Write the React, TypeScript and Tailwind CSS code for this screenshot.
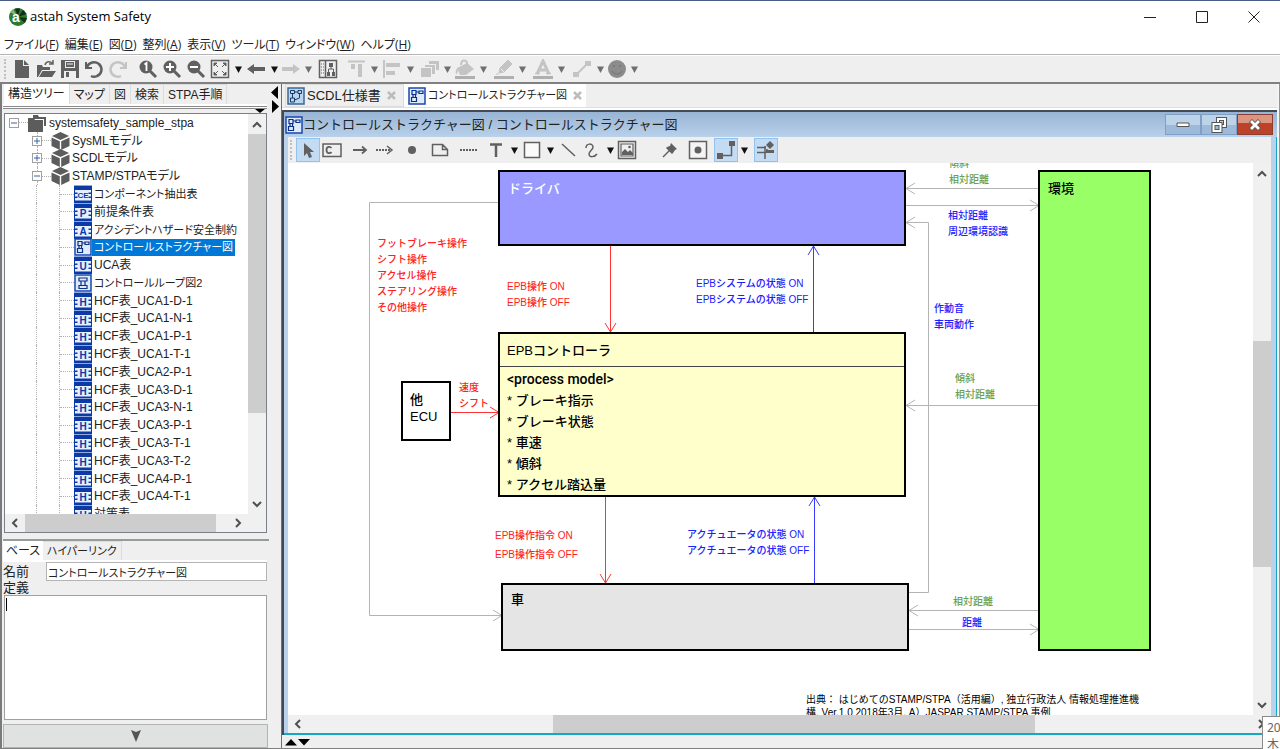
import React, { useState } from "react";

const UI_FONT = "font-['Liberation_Sans','Noto_Sans_CJK_JP',sans-serif]";
const PALT = "[font-feature-settings:'palt']";

/* ---------- icons ---------- */

const Svg = ({ size = 20, children }: { size?: number; children: React.ReactNode }) => (
  <svg width={size} height={size} viewBox="0 0 20 20" fill="none" className="shrink-0" aria-hidden="true">
    {children}
  </svg>
);

const G = "#606060";
const L = "#c4c4c4";

const icons: Record<string, React.ReactNode> = {
  file: <Svg><path d="M3 1h8v6h6v12H3z" fill={G} /><path d="M12 1l5 5h-5z" fill={G} /></Svg>,
  open: <Svg><path d="M1 18V6h5l1 2h7v3H6l-4 7z" fill={G} /><path d="M6.500 12H20l-4 6H3z" fill={G} /><path d="M9 6c1-4 5-4 7-2M17 1v4h-4" stroke={G} strokeWidth="1.500" /></Svg>,
  save: <Svg><path d="M1 1h18v18H1z" fill={G} /><path d="M5 2h10v7H5zM4 12h12v7H4z" fill="#efefef" /><path d="M6 3h8v5H6zM6 13h3v5H6z" fill={G} /><path d="M7 5h6" stroke="#efefef" /></Svg>,
  undo: <Svg><path d="M2 3v6h6" stroke={G} strokeWidth="2" /><path d="M3 8c2-5 8-6 12-3 4 4 3 10-2 12-2 1-4 1-6 0" stroke={G} strokeWidth="2.500" /></Svg>,
  redo: <Svg><path d="M18 3v6h-6" stroke={L} strokeWidth="2" /><path d="M17 8c-2-5-8-6-12-3-4 4-3 10 2 12 2 1 4 1 6 0" stroke={L} strokeWidth="2.500" /></Svg>,
  zoomOne: <Svg><circle cx="8" cy="8" r="6.500" fill={G} /><path d="M12 12l6 6" stroke={G} strokeWidth="3" /><path d="M6.500 5.500L8.500 4v8" stroke="#fff" strokeWidth="1.800" /></Svg>,
  zoomIn: <Svg><circle cx="8" cy="8" r="6.500" fill={G} /><path d="M12 12l6 6" stroke={G} strokeWidth="3" /><path d="M4 8h8M8 4v8" stroke="#fff" strokeWidth="2" /></Svg>,
  zoomOut: <Svg><circle cx="8" cy="8" r="6.500" fill={G} /><path d="M12 12l6 6" stroke={G} strokeWidth="3" /><path d="M4 8h8" stroke="#fff" strokeWidth="2" /></Svg>,
  fit: <Svg><path d="M1.500 1.500h17v17h-17z" stroke={G} strokeWidth="1.500" /><path d="M4 7V4h3zM13 4h3v3zM16 13v3h-3zM7 16H4v-3z" fill={G} stroke={G} /><path d="M4 4l4 4M16 4l-4 4M16 16l-4-4M4 16l4-4" stroke={G} /></Svg>,
  left: <Svg><path d="M1 10l7-5v3h11v4H8v3z" fill={G} /></Svg>,
  right: <Svg><path d="M19 10l-7-5v3H1v4h11v3z" fill={L} /></Svg>,
  tree: <Svg><path d="M1.500 1.500h17v17h-17zM7.500 1.500v17" stroke={G} strokeWidth="1.500" /><path d="M3 5h3M3 8h3M3 11h3M3 14h3" stroke={G} strokeDasharray="1 1" /><path d="M11 4h4v4h-4zM9 13h3v4H9zM14 13h3v4h-3z" fill={G} /><path d="M13 8v2M10.500 13v-3h5v3" stroke={G} /></Svg>,
  alignTop: <Svg><path d="M1 2.500h17" stroke={L} strokeWidth="2" /><path d="M4 5h4v5H4zM11 5h4v13h-4z" fill={L} /></Svg>,
  alignLeft: <Svg><path d="M2 1v18" stroke={L} strokeWidth="2" /><path d="M4 4h14v4H4zM4 12h9v4H4z" fill={L} /></Svg>,
  layers: <Svg><path d="M1 9h10v9H1z" fill={L} /><path d="M5 8V6h10v9h-3V8zM9 5V2h10v9h-3V5z" fill={L} /></Svg>,
  bucket: <Svg><path d="M0 18.500h20" stroke="#b0b0b0" strokeWidth="3" /><path d="M2 9l10-5 7 6-8 6H5z" fill={L} /><path d="M6 6c0-6 7-6 6 0" stroke={L} strokeWidth="2" /><path d="M2 9c-1 2-2 5-1 6s2-3 2-5" fill={L} /></Svg>,
  pencil: <Svg><path d="M0 18.500h20" stroke="#b0b0b0" strokeWidth="3" /><path d="M6 9l8-8 4 4-8 8-5 1zM5 15h-3" fill={L} stroke={L} /><path d="M7 10l3 3" stroke="#efefef" /></Svg>,
  letter: <Svg><path d="M0 18.500h20" stroke="#b0b0b0" strokeWidth="3" /><path d="M4 15L10 2l6 13M6 11h8" stroke={L} strokeWidth="3" /><path d="M2 14.500h5M13 14.500h5" stroke={L} strokeWidth="1.500" /></Svg>,
  connector: <Svg><path d="M4 16L15 5" stroke={L} strokeWidth="2" /><path d="M1 13h6v5H1zM13 2h6v5h-6z" fill={L} /></Svg>,
  face: <Svg><circle cx="10" cy="10" r="9" fill="#8c8c8c" /><path d="M5 12c2 4 8 4 10 0" stroke="#7c7c7c" strokeWidth="1.500" /><path d="M6 7h2M12 7h2" stroke="#7c7c7c" strokeWidth="2" /></Svg>,
  cursor: <Svg><path d="M6 3v13l3-3 2 5 3-1-2-5h4z" fill={G} /></Svg>,
  component: <Svg><path d="M1 4h18v12.500H1z" stroke={G} strokeWidth="1.500" /><path d="M9.500 8c-1.500-2-5-1.500-5 2s3.500 4 5 2" stroke={G} strokeWidth="1.800" /></Svg>,
  arrow: <Svg><path d="M3 10h13M12 6.500l4 3.500-4 3.500" stroke={G} strokeWidth="1.800" /></Svg>,
  dotArrow: <Svg><path d="M2 10h14" stroke={G} strokeWidth="1.800" strokeDasharray="2 1" /><path d="M13 6l5 4-5 4" stroke={G} strokeWidth="1.500" /></Svg>,
  dot: <Svg><circle cx="10" cy="10" r="4" fill={G} /></Svg>,
  note: <Svg><path d="M2.500 4.500h10l5 5v6h-15zM12.500 4.500v5h5" stroke={G} strokeWidth="1.500" /></Svg>,
  dots: <Svg><path d="M2 10h17" stroke={G} strokeWidth="2" strokeDasharray="2 1" /></Svg>,
  text: <Svg><path d="M4 4.500h12" stroke={G} strokeWidth="2.500" /><path d="M10 4v13" stroke={G} strokeWidth="2.500" /></Svg>,
  rect: <Svg><path d="M2.500 2.500h15v15h-15z" stroke={G} strokeWidth="1.500" fill="#fafafa" /></Svg>,
  line: <Svg><path d="M4 4l13 12" stroke={G} strokeWidth="1.500" /></Svg>,
  curve: <Svg><path d="M4 8c0-5 7-5 7-1 0 3-4 4-4 7 0 4 6 3 8 0" stroke={G} strokeWidth="1.500" /></Svg>,
  image: <Svg><path d="M1.500 1.500h17v17h-17z" stroke={G} strokeWidth="1.500" /><path d="M4 4h12v12H4z" stroke={G} strokeWidth="1.200" /><path d="M5 15v-3l3-3 3 3 2-2 3 3v2z" fill={G} /><circle cx="12.500" cy="7" r="1.300" fill={G} /></Svg>,
  pin: <Svg><path d="M3 17l7-7" stroke={G} strokeWidth="1.500" /><path d="M11 3l6 6-2 1-2 3-1 1-6-6 1-1 3-1z" fill={G} /></Svg>,
  target: <Svg><path d="M1.500 1.500h17v17h-17z" stroke={G} strokeWidth="1.500" fill="#f4f4f4" /><circle cx="10" cy="10" r="3.500" fill={G} /></Svg>,
  elbow: <Svg><path d="M5 15.500h10.500V5" stroke={G} strokeWidth="1.500" /><path d="M1 13h6v6H1zM13 1h6v5h-6z" fill={G} /></Svg>,
  suggest: <Svg><path d="M1 7.500h9M1 12.500h9M9 6v13M10 10h2" stroke={G} strokeWidth="1.500" /><path d="M14 1l4 4-4 4-4-4zM10 10h8v3h-8z" fill={G} /></Svg>,
};

const Caret = ({ light = false }: { light?: boolean }) => (
  <svg width="7" height="7" viewBox="0 0 7 7" aria-hidden="true">
    <path d="M0 0.500h7L3.500 7z" fill={light ? "#6f6f6f" : "#111"} />
  </svg>
);

const Chevron = ({ dir }: { dir: "up" | "down" | "left" | "right" }) => {
  const d = {
    up: "M1 8l4-4 4 4",
    down: "M1 3l4 4 4-4",
    left: "M7 1L3 5l4 4",
    right: "M3 1l4 4-4 4",
  }[dir];
  return (
    <svg width="10" height="10" viewBox="0 0 10 10" fill="none" aria-hidden="true">
      <path d={d} stroke="#505050" strokeWidth="2" />
    </svg>
  );
};

const StructureIcon = () => (
  <svg width="18" height="18" viewBox="0 0 18 18" fill="none" className="shrink-0" aria-hidden="true">
    <path d="M1 1h16v16H1z" fill="#dfeafb" stroke="#1848b0" strokeWidth="1.500" />
    <path d="M4 3.500h4v4H4zM3.500 10.500h5v4h-5zM5 7.500v3M7.500 7.500v3M8 5h3M11 4h4v2.500h-4z" stroke="#0a2f8c" strokeWidth="1.200" />
  </svg>
);

const ScdlIcon = () => (
  <svg width="18" height="18" viewBox="0 0 18 18" fill="none" className="shrink-0" aria-hidden="true">
    <path d="M1 1h16v16H1z" fill="#b9d6f0" stroke="#3c6596" strokeWidth="1.500" />
    <path d="M3.500 3.500h4v3h-4zM11 3.500h3.500v3H11zM3.500 11h4v4h-4zM7.500 5H11M5.500 6.500V11M12.500 6.500v4.500l-5 2" stroke="#1c3a66" />
  </svg>
);

const LoopIcon = () => (
  <svg width="18" height="18" viewBox="0 0 18 18" fill="none" className="shrink-0" aria-hidden="true">
    <path d="M1 1h16v16H1z" fill="#dfeafb" stroke="#1848b0" strokeWidth="1.500" />
    <path d="M5 4h8v3H5zM5 11.500h8v3H5zM7 7v4.500M11 7v4.500" stroke="#0a2f8c" strokeWidth="1.200" />
  </svg>
);

const TableIcon = ({ letter }: { letter: string }) => (
  <svg width="18" height="18" viewBox="0 0 18 18" className="shrink-0" aria-hidden="true">
    <path d="M0 0h18v18H0z" fill="#0b39a6" />
    <path d="M0 0h18v1H0z" fill="#8fa9dc" />
    <path d="M1 5h3v2.500H1zM1 9h3v2.500H1zM1 13h3v2.500H1zM14 5h3v2.500h-3zM14 9h3v2.500h-3zM14 13h3v2.500h-3zM3.500 5h11v10.500h-11z" fill="#e6efff" />
    <text x="9" y={letter.length > 1 ? 13 : 14} textAnchor="middle" fontSize={letter.length > 1 ? 8 : 10} fontWeight="700" fill="#0b39a6" fontFamily="Liberation Sans, sans-serif">
      {letter}
    </text>
  </svg>
);

const CubeIcon = () => (
  <svg width="19" height="18" viewBox="0 0 19 18" className="shrink-0" aria-hidden="true">
    <path d="M9.500 0L18 4 9.500 8 1 4zM0.500 5.500L8.800 9.300V18L0.500 14zM18.500 5.500L10.200 9.300V18l8.300-4z" fill="#5c5c5c" />
  </svg>
);

const FolderIcon = () => (
  <svg width="19" height="18" viewBox="0 0 19 18" className="shrink-0" aria-hidden="true">
    <path d="M5 1h5l1 2h7v9h-2V5H5z" fill="#5c5c5c" />
    <path d="M0 4h6l1 2h8v12H0z" fill="#5c5c5c" />
  </svg>
);

/* ---------- scroll bars ---------- */

const VScroll = ({ before, thumb, after }: { before: string; thumb: string; after: string }) => (
  <div className="flex w-[18px] shrink-0 flex-col bg-[#f0f0f0]">
    <button aria-label="上へ" className="flex h-5 shrink-0 items-center justify-center"><Chevron dir="up" /></button>
    <div className={before} />
    <div className={"bg-[#cdcdcd] " + thumb} />
    <div className={after} />
    <button aria-label="下へ" className="flex h-5 shrink-0 items-center justify-center"><Chevron dir="down" /></button>
  </div>
);

const HScroll = ({ before, thumb, after }: { before: string; thumb: string; after: string }) => (
  <div className="flex h-[18px] min-w-0 flex-1 bg-[#f0f0f0]">
    <button aria-label="左へ" className="flex w-5 shrink-0 items-center justify-center"><Chevron dir="left" /></button>
    <div className={before} />
    <div className={"bg-[#cdcdcd] " + thumb} />
    <div className={after} />
    <button aria-label="右へ" className="flex w-5 shrink-0 items-center justify-center"><Chevron dir="right" /></button>
  </div>
);

/* ---------- title, menu and tool bars ---------- */

const TitleBar = () => (
  <header className="flex h-8 shrink-0 items-center bg-white pl-2">
    <svg width="20" height="20" viewBox="0 0 20 20" aria-hidden="true">
      <circle cx="10" cy="10" r="9" fill="#2c7a2f" />
      <path d="M10 10L7 1.500h5zM10 10l5-7 3.500 4zM10 10l9 1-2 5z" fill="#12301a" />
      <path d="M10 10L2 5l3-3z" fill="#7fb96a" />
      <text x="8" y="15" textAnchor="middle" fontSize="14" fontWeight="700" fill="#fff" fontFamily="Liberation Sans, sans-serif">a</text>
    </svg>
    <h1 className="ml-[2px] flex-1 font-['Open_Sans',sans-serif] text-[13px] text-black">astah System Safety</h1>
    <button aria-label="最小化" className="flex h-8 w-[52px] items-center justify-center">
      <svg width="12" height="12" viewBox="0 0 12 12"><path d="M0 6.500h12" stroke="#222" /></svg>
    </button>
    <button aria-label="最大化" className="flex h-8 w-[52px] items-center justify-center">
      <svg width="12" height="12" viewBox="0 0 12 12" fill="none"><path d="M.5.5h11v11H.5z" stroke="#222" /></svg>
    </button>
    <button aria-label="閉じる" className="flex h-8 w-[52px] items-center justify-center">
      <svg width="12" height="12" viewBox="0 0 12 12" fill="none"><path d="M.5.5l11 11M11.500.5l-11 11" stroke="#222" /></svg>
    </button>
  </header>
);

const menus = [
  ["ファイル", "F"],
  ["編集", "E"],
  ["図", "D"],
  ["整列", "A"],
  ["表示", "V"],
  ["ツール", "T"],
  ["ウィンドウ", "W"],
  ["ヘルプ", "H"],
];

const MenuBar = () => (
  <nav className={"flex h-[22px] shrink-0 items-center gap-[6px] border-b border-[#b5b5b5] bg-white pt-[2px] pl-1 font-['Open_Sans','Noto_Sans_CJK_JP',sans-serif] text-[12px] text-[#222] " + PALT}>
    {menus.map(([label, key]) => (
      <button key={key} className="whitespace-nowrap">
        {label}(<span className="underline">{key}</span>)
      </button>
    ))}
  </nav>
);

type Tool = { icon: string; name: string; box: string; caret?: string; light?: boolean };

const mainTools: Tool[] = [
  { icon: "file", name: "新規", box: "ml-[4px] w-6" },
  { icon: "open", name: "開く", box: "w-6" },
  { icon: "save", name: "保存", box: "w-6" },
  { icon: "undo", name: "元に戻す", box: "w-6" },
  { icon: "redo", name: "やり直し", box: "w-6" },
  { icon: "zoomOne", name: "等倍", box: "ml-[6px] w-6" },
  { icon: "zoomIn", name: "拡大", box: "w-6" },
  { icon: "zoomOut", name: "縮小", box: "w-6" },
  { icon: "fit", name: "全体表示", box: "w-6", caret: "w-3" },
  { icon: "left", name: "戻る", box: "w-6", caret: "w-3" },
  { icon: "right", name: "進む", box: "w-[22px]", caret: "w-3", light: true },
  { icon: "tree", name: "構造", box: "ml-[2px] w-6" },
  { icon: "alignTop", name: "上揃え", box: "ml-[6px] w-[22px]", caret: "w-3", light: true },
  { icon: "alignLeft", name: "左揃え", box: "w-6", caret: "w-3", light: true },
  { icon: "layers", name: "重なり順", box: "ml-[3px] w-[22px]", caret: "w-3", light: true },
  { icon: "bucket", name: "塗り", box: "w-6", caret: "w-3", light: true },
  { icon: "pencil", name: "線の色", box: "ml-[3px] w-6", caret: "w-3", light: true },
  { icon: "letter", name: "文字色", box: "ml-[3px] w-6", caret: "w-3", light: true },
  { icon: "connector", name: "線の形", box: "ml-[3px] w-6", caret: "w-3", light: true },
  { icon: "face", name: "アイコン", box: "w-[22px]", caret: "w-3", light: true },
];

const diagramTools: Tool[] = [
  { icon: "cursor", name: "選択", box: "ml-[4px] w-6 border border-[#91c3ee] bg-[#c3dcf3]" },
  { icon: "component", name: "コンポーネント", box: "w-6" },
  { icon: "arrow", name: "コントロールアクション", box: "ml-[4px] w-6" },
  { icon: "dotArrow", name: "フィードバック", box: "w-6" },
  { icon: "dot", name: "接点", box: "ml-[4px] w-6" },
  { icon: "note", name: "ノート", box: "ml-[4px] w-6" },
  { icon: "dots", name: "アンカー", box: "ml-[4px] w-6" },
  { icon: "text", name: "テキスト", box: "ml-[4px] w-6", caret: "w-3" },
  { icon: "rect", name: "四角形", box: "w-6", caret: "w-3" },
  { icon: "line", name: "直線", box: "w-6" },
  { icon: "curve", name: "自由線", box: "w-6", caret: "w-3" },
  { icon: "image", name: "画像", box: "w-[22px]" },
  { icon: "pin", name: "固定", box: "ml-[20px] w-6" },
  { icon: "target", name: "中央", box: "ml-[4px] w-6" },
  { icon: "elbow", name: "折れ線", box: "ml-[4px] w-6 border border-[#91c3ee] bg-[#c3dcf3]", caret: "w-3" },
  { icon: "suggest", name: "サジェスト", box: "ml-[4px] w-6 border border-[#91c3ee] bg-[#c3dcf3]" },
];

const ToolRow = ({ tools }: { tools: Tool[] }) => (
  <>
    {tools.map((t) => (
      <React.Fragment key={t.icon}>
        <button aria-label={t.name} className={"flex h-6 shrink-0 items-center justify-center " + t.box}>
          {icons[t.icon]}
        </button>
        {t.caret && (
          <button aria-label={t.name + "メニュー"} className={"flex h-6 shrink-0 items-center justify-center " + t.caret}>
            <Caret light={t.light} />
          </button>
        )}
      </React.Fragment>
    ))}
  </>
);

/* ---------- left side ---------- */

type Node = { level: number; label: string; icon: React.ReactNode; open?: boolean; small?: boolean };

const hcf = ["1-D-1", "1-N-1", "1-P-1", "1-T-1", "2-P-1", "3-D-1", "3-N-1", "3-P-1", "3-T-1", "3-T-2", "4-P-1", "4-T-1"];

const nodes: Node[] = [
  { level: 0, label: "systemsafety_sample_stpa", icon: <FolderIcon />, open: true },
  { level: 1, label: "SysMLモデル", icon: <CubeIcon /> },
  { level: 1, label: "SCDLモデル", icon: <CubeIcon /> },
  { level: 1, label: "STAMP/STPAモデル", icon: <CubeIcon />, open: true },
  { level: 2, label: "コンポーネント抽出表", icon: <TableIcon letter="CE" />, small: true },
  { level: 2, label: "前提条件表", icon: <TableIcon letter="P" /> },
  { level: 2, label: "アクシデントハザード安全制約", icon: <TableIcon letter="A" />, small: true },
  { level: 2, label: "コントロールストラクチャー図", icon: <StructureIcon />, small: true },
  { level: 2, label: "UCA表", icon: <TableIcon letter="U" /> },
  { level: 2, label: "コントロールループ図2", icon: <LoopIcon />, small: true },
  ...hcf.map((n) => ({ level: 2, label: "HCF表_UCA" + n, icon: <TableIcon letter="H" /> })),
  { level: 2, label: "対策表", icon: <TableIcon letter="H" /> },
];

const Expander = ({ open, first }: { open?: boolean; first?: boolean }) => (
  <div className="flex w-[10px] flex-col items-center self-stretch">
    <div className={first ? "flex-1" : "flex-1 border-l border-dotted border-[#b0b0b0]"} />
    <button aria-label={open ? "閉じる" : "開く"} className="flex size-[10px] items-center justify-center border border-[#a0a0a0] bg-white">
      <svg width="6" height="6" viewBox="0 0 6 6"><path d={open ? "M0 3h6" : "M0 3h6M3 0v6"} stroke="#3464a8" /></svg>
    </button>
    <div className={first ? "flex-1" : "flex-1 border-l border-dotted border-[#b0b0b0]"} />
  </div>
);

const TreeRow = ({ node, selected, onSelect }: { node: Node; selected: boolean; onSelect: () => void }) => (
  <li className="flex min-h-0 items-center">
    {node.level === 0 && <div className="w-1" />}
    {node.level === 1 && <div className="w-[27px]" />}
    {node.level < 2 && <Expander open={node.open} first={node.level === 0} />}
    {node.level === 2 && (
      <>
        <div className="w-8 self-stretch border-r border-dotted border-[#b0b0b0]" />
        <div className="w-[23px] self-stretch border-r border-dotted border-[#b0b0b0]" />
      </>
    )}
    <div className={"border-t border-dotted border-[#b0b0b0] " + (node.level === 2 ? "w-[14px]" : "w-[9px]")} />
    {node.icon}
    <button
      onClick={onSelect}
      className={
        "h-[17px] whitespace-nowrap px-[2px] leading-4 " +
        (node.small ? "text-[11px] " : "text-[12px] ") +
        (selected ? "bg-[#0078d7] text-white" : "text-[#222]")
      }
    >
      {node.label}
    </button>
  </li>
);

const sideTabs = ["構造ツリー", "マップ", "図", "検索", "STPA手順"];

const StructurePanel = () => {
  const [selected, setSelected] = useState("コントロールストラクチャー図");
  return (
    <section className="flex min-h-0 flex-1 flex-col">
      <div className="flex h-5 shrink-0 items-stretch pl-px text-[12px] text-[#222]">
        {sideTabs.map((t, i) => (
          <button key={t} className={"flex items-center whitespace-nowrap border-r border-[#dcdcdc] px-1 " + (i === 0 ? "bg-white" : "border-t")}>
            {t}
          </button>
        ))}
      </div>
      <div className="mr-[2px] flex h-[5px] shrink-0 justify-end border-t-2 border-white">
        <div className="flex-1 border-y border-[#8a8a8a] bg-white" />
      </div>
      <div className="flex h-1 shrink-0 justify-end pr-1">
        <svg width="10" height="4" viewBox="0 0 10 4"><path d="M0 0h10L5 4z" fill="#000" /></svg>
      </div>
      <div className="mr-[2px] ml-px flex min-h-0 flex-1 flex-col border border-[#7a7f88] bg-white">
        <div className="flex min-h-0 flex-1">
          <div className="min-w-0 flex-1 overflow-hidden">
            <ul className="grid h-[409px] auto-rows-fr">
              {nodes.map((n) => (
                <TreeRow key={n.label} node={n} selected={n.label === selected} onSelect={() => setSelected(n.label)} />
              ))}
            </ul>
          </div>
          <VScroll before="h-0" thumb="flex-[279]" after="flex-[81]" />
        </div>
        <div className="flex shrink-0">
          <HScroll before="w-0" thumb="flex-1" after="w-3" />
          <div className="w-[18px] bg-[#f0f0f0]" />
        </div>
      </div>
    </section>
  );
};

const PropertyPanel = () => (
  <section className="mt-[6px] flex shrink-0 flex-col border-t-2 border-[#9a9a9a] text-[13px] text-[#222]">
    <div className="flex h-[19px] text-[12px]">
      <button className="w-10 bg-white">ベース</button>
      <button className="whitespace-nowrap border-t border-r border-[#dcdcdc] px-1 text-[11px]">ハイパーリンク</button>
    </div>
    <div className="mr-[2px] h-[2px] bg-white" />
    <div className="mr-[2px] flex h-[19px] items-center">
      <label htmlFor="name" className="w-[43px]">名前</label>
      <input id="name" defaultValue="コントロールストラクチャー図" className="h-[19px] min-w-0 flex-1 border border-[#b4b4b4] bg-white px-px text-[11px]" />
    </div>
    <label htmlFor="definition" className="h-[14px] leading-[14px]">定義</label>
    <div className="relative mr-[2px] ml-px flex">
      <textarea id="definition" className="h-[125px] flex-1 resize-none border border-[#a0a0a0] bg-white p-1" />
      <span className="absolute top-[3px] left-[2px] h-[13px] w-px bg-black" />
    </div>
    <button aria-label="詳細" className="mt-1 mr-px flex h-6 items-center justify-center border border-[#b4b4b4] bg-[#e0e2e1]">
      <svg width="10" height="12" viewBox="0 0 10 12"><path d="M0 0l5 2 5-2-5 12z" fill="#555" /></svg>
    </button>
  </section>
);

/* ---------- diagram ---------- */

const RED = "#ff3333";
const BLUE = "#3a3aff";
const GRAY = "#b4b4b4";

const wires = [
  { d: "M322.500 82V169", head: "M317 160l5.500 9 5.500-9", color: RED },
  { d: "M317.500 334V420", head: "M312 411l5.500 9 5.500-9", color: RED },
  { d: "M525.500 169V83", head: "M520 92l5.500-9 5.500 9", color: BLUE },
  { d: "M526.500 420V334", head: "M521 343l5.500-9 5.500 9", color: BLUE },
  { d: "M163 249.500H211", head: "M202 244l9 5.500-9 5.500", color: RED },
  { d: "M211 39.500H81.500V452.500H213", head: "M205 447l9 5.500-9 5.500", color: GRAY },
  { d: "M750 25.500H618", head: "M627 20l-9 5.500 9 5.500", color: GRAY },
  { d: "M618 42.500H750", head: "M742 37l9 5.500-9 5.500", color: GRAY },
  { d: "M621 429.500H640.500V59.500H618", head: "M627 54l-9 5.500 9 5.500", color: GRAY },
  { d: "M750 242.500H618", head: "M627 237l-9 5.500 9 5.500", color: GRAY },
  { d: "M750 447.500H621", head: "M630 442l-9 5.500 9 5.500", color: GRAY },
  { d: "M621 466.500H750", head: "M742 461l9 5.500-9 5.500", color: GRAY },
];

const labels = [
  { at: "left-[89px] top-[73px] text-[#ff2020]", lines: ["フットブレーキ操作", "シフト操作", "アクセル操作", "ステアリング操作", "その他操作"] },
  { at: "left-[219px] top-[116px] text-[#ff2020]", lines: ["EPB操作 ON", "EPB操作 OFF"] },
  { at: "left-[171px] top-[217px] text-[#ff2020]", lines: ["速度", "シフト"] },
  { at: "left-[207px] top-[365px] text-[#ff2020]", lines: ["EPB操作指令 ON"] },
  { at: "left-[207px] top-[384px] text-[#ff2020]", lines: ["EPB操作指令 OFF"] },
  { at: "left-[408px] top-[113px] text-[#2020ff]", lines: ["EPBシステムの状態 ON", "EPBシステムの状態 OFF"] },
  { at: "left-[399px] top-[364px] text-[#2020ff]", lines: ["アクチュエータの状態 ON", "アクチュエータの状態 OFF"] },
  { at: "left-[660px] top-[45px] text-[#2020ff]", lines: ["相対距離", "周辺環境認識"] },
  { at: "left-[646px] top-[138px] text-[#2020ff]", lines: ["作動音", "車両動作"] },
  { at: "left-[674px] top-[452px] text-[#2020ff]", lines: ["距離"] },
  { at: "left-[661px] top-[-7px] text-[#68a050]", lines: ["傾斜", "相対距離"] },
  { at: "left-[667px] top-[208px] text-[#68a050]", lines: ["傾斜", "相対距離"] },
  { at: "left-[665px] top-[431px] text-[#68a050]", lines: ["相対距離"] },
];

const processModel = ["ブレーキ指示", "ブレーキ状態", "車速", "傾斜", "アクセル踏込量"];

const Canvas = () => (
  <div className="relative min-w-0 flex-1 overflow-hidden bg-white font-medium text-black">
    <svg width="965" height="551" viewBox="0 0 965 551" fill="none" className="absolute top-0 left-0">
      {wires.map((w) => (
        <g key={w.d} stroke={w.color}>
          <path d={w.d} />
          <path d={w.head} />
        </g>
      ))}
    </svg>
    <div className="absolute top-[7px] left-[210px] h-[76px] w-[408px] border-2 border-black bg-[#9999ff] px-2 pt-2 text-[13px] leading-[18px] text-white">
      ドライバ
    </div>
    <div className="absolute top-[169px] left-[210px] h-[165px] w-[408px] border-2 border-black bg-[#ffffcc] text-[13px]">
      <div className="h-[33px] border-b border-[#444] px-[7px] leading-[34px]">EPBコントローラ</div>
      <div className="px-[7px] pt-[2px] leading-[21px]">
        <p className="font-['Roboto',sans-serif] text-[14px]">&lt;process model&gt;</p>
        {processModel.map((p) => (
          <p key={p}>* {p}</p>
        ))}
      </div>
    </div>
    <div className="absolute top-[218px] left-[113px] h-[60px] w-[50px] border-2 border-black bg-white px-[7px] pt-2 text-[13px] leading-[17px]">
      他<br />ECU
    </div>
    <div className="absolute top-[420px] left-[213px] h-[68px] w-[408px] border-2 border-black bg-[#e5e5e5] px-2 pt-[6px] text-[13px] leading-[18px]">
      車
    </div>
    <div className="absolute top-[7px] left-[750px] h-[481px] w-[113px] border-2 border-black bg-[#99ff66] px-2 pt-2 text-[13px] leading-[18px]">
      環境
    </div>
    {labels.map((l) => (
      <div key={l.at} className={"absolute whitespace-nowrap text-[10px] leading-4 " + l.at}>
        {l.lines.map((t) => (
          <p key={t}>{t}</p>
        ))}
      </div>
    ))}
    <div className="absolute top-[530px] left-[518px] whitespace-nowrap text-[10px] leading-[13px] font-normal">
      <p>出典： はじめてのSTAMP/STPA（活用編）, 独立行政法人 情報処理推進機</p>
      <p>構, Ver.1.0 2018年3月, A）JASPAR STAMP/STPA 事例</p>
    </div>
  </div>
);

const frameButton = "flex h-[21px] w-9 items-center justify-center border border-[#7f9fc4] bg-linear-to-b from-[#bdd3ea] from-50% to-[#9dbadb] to-50%";

const DiagramFrame = () => (
  <div className="flex min-h-0 flex-1 flex-col border-t-2 border-l-2 border-[#444a55]">
    <div className="flex h-[25px] shrink-0 items-center bg-linear-to-b from-[#98b4d4] to-[#b9d1ea] pr-1 pl-px">
      <StructureIcon />
      <h2 className="flex-1 text-[13px] whitespace-nowrap text-[#222]">コントロールストラクチャー図 / コントロールストラクチャー図</h2>
      <button aria-label="最小化" className={frameButton}>
        <svg width="14" height="6" viewBox="0 0 14 6"><path d="M1 1h12v3.500H1z" fill="#fff" stroke="#555" /></svg>
      </button>
      <button aria-label="元のサイズに戻す" className={frameButton}>
        <svg width="16" height="16" viewBox="0 0 16 16" fill="none">
          <path d="M7 2h7v7H7z" stroke="#555" strokeWidth="4" /><path d="M7 2h7v7H7z" stroke="#fff" strokeWidth="2" />
          <path d="M2.500 7h7v7h-7z" fill="#9dbadb" stroke="#555" strokeWidth="4" /><path d="M2.500 7h7v7h-7z" stroke="#fff" strokeWidth="2" />
        </svg>
      </button>
      <button aria-label="閉じる" className="flex h-[21px] w-9 items-center justify-center border border-[#8a4030] bg-linear-to-b from-[#dc9580] from-40% to-[#bd4228] to-40%">
        <svg width="14" height="14" viewBox="0 0 14 14" fill="none">
          <path d="M2.500 2.500l9 9M11.500 2.500l-9 9" stroke="#555" strokeWidth="4.500" />
          <path d="M3 3l8 8M11 3l-8 8" stroke="#fff" strokeWidth="2.800" />
        </svg>
      </button>
    </div>
    <div className="flex min-h-0 flex-1 border-r border-b-2 border-[#14a8c4]">
      <div className="w-1 shrink-0 bg-[#b9d1ea]" />
      <div className="flex min-w-0 flex-1 flex-col">
        <div className="flex h-[26px] shrink-0 items-center bg-[#efefef]">
          <div className="ml-[2px] h-5 border-l-2 border-dotted border-[#c0c0c0]" />
          <ToolRow tools={diagramTools} />
        </div>
        <div className="flex min-h-0 flex-1">
          <Canvas />
          <VScroll before="flex-[158]" thumb="flex-[225]" after="flex-[128]" />
        </div>
        <div className="flex shrink-0">
          <HScroll before="flex-[245]" thumb="flex-[482]" after="flex-[216]" />
        </div>
      </div>
      <div className="w-[5px] shrink-0 bg-[#b9d1ea]" />
    </div>
  </div>
);

const CloseX = () => (
  <svg width="9" height="9" viewBox="0 0 9 9" aria-hidden="true"><path d="M1 1l7 7M8 1L1 8" stroke="#bcbcbc" strokeWidth="2.500" /></svg>
);

export default function App() {
  return (
    <div className={"relative flex h-screen flex-col overflow-hidden border-t border-[#4b5c86] bg-[#efefef] " + UI_FONT}>
      <TitleBar />
      <MenuBar />
      <div className="flex h-[27px] shrink-0 items-center border-t border-white pl-1">
        <div className="h-5 border-l-2 border-dotted border-[#c0c0c0]" />
        <ToolRow tools={mainTools} />
      </div>
      <main className="flex min-h-0 flex-1 border-t-2 border-b border-[#808080]">
        <aside className={"flex w-[269px] shrink-0 flex-col border-l-2 border-[#7a7a7a] pl-px " + PALT}>
          <StructurePanel />
          <PropertyPanel />
        </aside>
        <div className="flex w-3 shrink-0 flex-col items-center gap-px pt-[2px]">
          <svg width="8" height="28" viewBox="0 0 8 28" aria-hidden="true"><path d="M7 0v13L0 6.500zM1 14v13l7-6.500z" fill="#000" /></svg>
        </div>
        <section className="flex min-w-0 flex-1 flex-col border-l border-[#707070]">
          <div className={"flex h-6 shrink-0 border-b border-[#e0e0e0] pl-[3px] text-[13px] text-[#222] " + PALT}>
            <button className="flex w-[119px] items-center gap-[2px] whitespace-nowrap border border-[#dcdcdc] px-px">
              <ScdlIcon />SCDL仕様書<span className="ml-1"><CloseX /></span>
            </button>
            <button className="flex items-center gap-[2px] whitespace-nowrap bg-white px-1 text-[11px]">
              <StructureIcon />コントロールストラクチャー図<span className="ml-1"><CloseX /></span>
            </button>
          </div>
          <div className="h-[2px] shrink-0 bg-white" />
          <DiagramFrame />
          <div className="flex h-[13px] shrink-0 items-center pl-[2px]">
            <svg width="28" height="8" viewBox="0 0 28 8" aria-hidden="true"><path d="M1 7.500h12L7 1zM14 1h12L20 7.500z" fill="#000" /></svg>
          </div>
        </section>
        <div className="w-[3px] shrink-0 border-r border-[#8a93a8] bg-[#f4f4f4]" />
      </main>
      <div className="absolute right-0 bottom-0 h-[33px] w-[18px] overflow-hidden border-t border-l border-[#8a8a8a] bg-white pt-[2px] pl-1 font-['Noto_Sans','Noto_Sans_CJK_JP',sans-serif] text-[12px] leading-[17px] text-[#666]">
        20<br />木
      </div>
    </div>
  );
}
